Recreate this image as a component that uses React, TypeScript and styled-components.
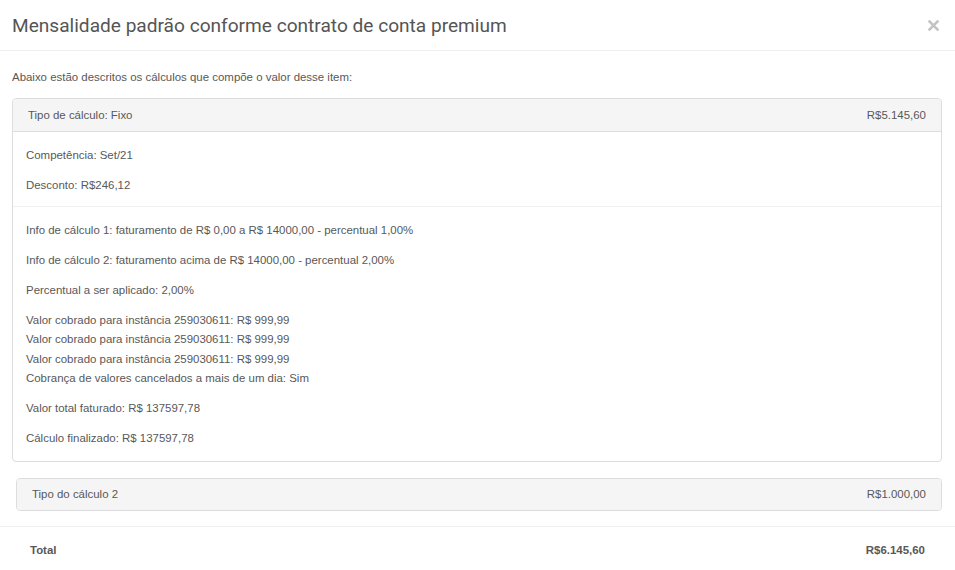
import { FC } from 'react';
import styled, { createGlobalStyle } from 'styled-components';

const GlobalStyle = createGlobalStyle`
    html, body {
        margin: 0;
        padding: 0;
        background: #fff;
    }
    body {
        font-family: "Liberation Sans", Arial, sans-serif;
        color: #585858;
        font-size: 11.45px;
    }
`;

const Modal = styled.div`
    width: 955px;
    height: 570px;
    display: flex;
    flex-direction: column;
    overflow: hidden;
`;

const Header = styled.div`
    height: 51px;
    box-sizing: border-box;
    padding: 0 15px 0 12px;
    display: flex;
    align-items: center;
    justify-content: space-between;
    border-bottom: 1px solid #eeeeee;
`;

const Title = styled.h4`
    margin: 0;
    font-family: Roboto, "Liberation Sans", sans-serif;
    font-weight: 400;
    font-size: 19.1px;
    color: #555;
`;

const Close = styled.button`
    border: none;
    background: transparent;
    padding: 0;
    width: 14px;
    height: 14px;
    display: flex;
    align-items: center;
    justify-content: center;
    cursor: pointer;
`;

const Body = styled.div`
    padding: 17px 13px 15px 12px;
    border-bottom: 1px solid #eeeeee;
`;

const Intro = styled.p`
    margin: 0 0 11px;
    line-height: 19px;
`;

const Panel = styled.div<{ $inset?: number }>`
    margin-left: ${p => p.$inset ?? 0}px;
    border: 1px solid #dddddd;
    border-radius: 4px;
    overflow: hidden;
    & + & {
        margin-top: 16px;
    }
`;

const PanelHeading = styled.div<{ $only?: boolean }>`
    background: #f5f5f5;
    padding: ${p => (p.$only ? '6px 15px' : '7px 15px 6px')};
    line-height: 19px;
    display: flex;
    justify-content: space-between;
    border-bottom: ${p => (p.$only ? 'none' : '1px solid #dddddd')};
`;

const Section = styled.div<{ $top: number; $bottom: number }>`
    padding: ${p => p.$top}px 13px ${p => p.$bottom}px;
    & + & {
        border-top: 1px solid #f0f0f0;
    }
`;

const Line = styled.p`
    margin: 0 0 11px;
    line-height: 19px;
    &:last-child {
        margin-bottom: 0;
    }
`;

const Group = styled.div`
    margin: 0 0 11px;
    line-height: 19.3px;
`;

const Footer = styled.div`
    padding: 14px 30px 0 30px;
    display: flex;
    justify-content: space-between;
    font-weight: 700;
    line-height: 19px;
`;

const instancias = ['259030611', '259030611', '259030611'];

const App: FC = () => {
    return <Modal>
        <GlobalStyle/>
        <Header>
            <Title>Mensalidade padrão conforme contrato de conta premium</Title>
            <Close aria-label={'Fechar'}>
                <svg width="13" height="13" viewBox="0 0 12 12">
                    <path d="M1.5 1.5 L10.5 10.5 M10.5 1.5 L1.5 10.5" stroke="#c4c4c4" strokeWidth="2.6"
                          strokeLinecap="butt"/>
                </svg>
            </Close>
        </Header>
        <Body>
            <Intro>Abaixo estão descritos os cálculos que compõe o valor desse item:</Intro>

            <Panel>
                <PanelHeading>
                    <span>Tipo de cálculo: Fixo</span>
                    <span>R$5.145,60</span>
                </PanelHeading>
                <Section $top={14} $bottom={11}>
                    <Line>Competência: Set/21</Line>
                    <Line>Desconto: R$246,12</Line>
                </Section>
                <Section $top={14} $bottom={13}>
                    <Line>Info de cálculo 1: faturamento de R$ 0,00 a R$ 14000,00 - percentual 1,00%</Line>
                    <Line>Info de cálculo 2: faturamento acima de R$ 14000,00 - percentual 2,00%</Line>
                    <Line>Percentual a ser aplicado: 2,00%</Line>
                    <Group>
                        {instancias.map((id, i) => <div key={i}>Valor cobrado para instância {id}: R$ 999,99</div>)}
                        <div>Cobrança de valores cancelados a mais de um dia: Sim</div>
                    </Group>
                    <Line>Valor total faturado: R$ 137597,78</Line>
                    <Line>Cálculo finalizado: R$ 137597,78</Line>
                </Section>
            </Panel>

            <Panel $inset={4}>
                <PanelHeading $only={true}>
                    <span>Tipo do cálculo 2</span>
                    <span>R$1.000,00</span>
                </PanelHeading>
            </Panel>
        </Body>
        <Footer>
            <span>Total</span>
            <span>R$6.145,60</span>
        </Footer>
    </Modal>;
};

export default App;
